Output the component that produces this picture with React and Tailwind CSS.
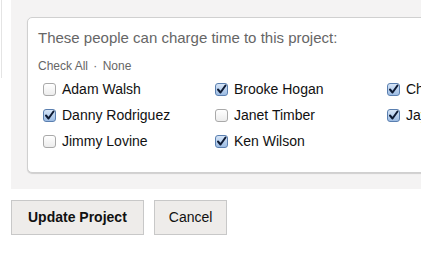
import React from 'react';

const people = [
  { name: 'Adam Walsh', checked: false },
  { name: 'Brooke Hogan', checked: true },
  { name: 'Charlie Brown', checked: true },
  { name: 'Danny Rodriguez', checked: true },
  { name: 'Janet Timber', checked: false },
  { name: 'Jay Parker', checked: true },
  { name: 'Jimmy Lovine', checked: false },
  { name: 'Ken Wilson', checked: true },
];

const Box = ({ checked }) =>
  checked ? (
    <span className="w-[13px] h-[13px] rounded-[3px] border border-[#5a7fb0] bg-gradient-to-b from-[#d6e5f7] to-[#9dbce3] flex items-center justify-center shrink-0">
      <svg width="11" height="11" viewBox="0 0 11 11">
        <path d="M2 5.5 L4.5 8.5 L9.5 1.5" fill="none" stroke="#0d1a33" strokeWidth="2" strokeLinecap="round" strokeLinejoin="round" />
      </svg>
    </span>
  ) : (
    <span className="w-[13px] h-[13px] rounded-[3px] border border-[#a9a9a9] bg-gradient-to-b from-white to-[#ececec] shrink-0" />
  );

export default function App() {
  return (
    <div className="w-[421px] h-[261px] bg-white overflow-hidden font-['Liberation_Sans',Arial,sans-serif]">
      <div className="flex">
        <div className="w-[11px] shrink-0">
          <div className="ml-[1px] h-[78px] border-l border-[#e4e4e4]" />
        </div>
        <div className="flex-1 h-[189px] bg-[#f4f3f3] pt-[17px] pl-[16px] overflow-hidden">
          <div className="w-[520px] h-[156px] bg-white border border-[#d0d0d0] rounded-[5px] shadow-[0_1px_1px_rgba(0,0,0,0.15)] pl-[10px] pt-[11px]">
            <p className="text-[15px] leading-[18px] text-[#666]">These people can charge time to this project:</p>
            <p className="mt-[12px] text-[12px] leading-[14px] text-[#666]">
              Check All <span className="mx-[2px]">·</span> None
            </p>
            <div className="mt-[8px] pl-[5px] grid grid-cols-[172px_172px_172px] gap-y-[10px]">
              {people.map((p) => (
                <label key={p.name} className="flex items-center gap-[6px] h-[16px] text-[14px] text-[#111] whitespace-nowrap">
                  <Box checked={p.checked} />
                  {p.name}
                </label>
              ))}
            </div>
          </div>
        </div>
      </div>
      <div className="flex gap-[10px] pl-[11px] pt-[11px]">
        <button type="button" className="h-[35px] px-[16px] bg-[#eeecea] border border-[#c8c8c8] text-[14px] font-bold text-[#111]">
          Update Project
        </button>
        <button type="button" className="h-[35px] px-[14px] bg-[#eeecea] border border-[#c8c8c8] text-[14px] text-[#111]">
          Cancel
        </button>
      </div>
    </div>
  );
}
